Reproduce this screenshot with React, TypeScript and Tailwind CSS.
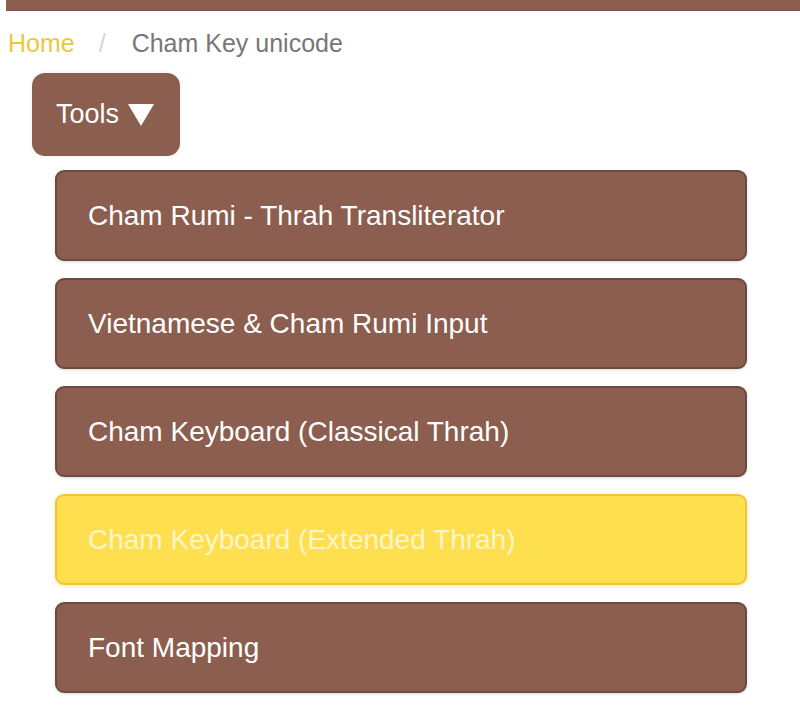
import React from "react";

const items = [
  { label: "Cham Rumi - Thrah Transliterator", active: false },
  { label: "Vietnamese & Cham Rumi Input", active: false },
  { label: "Cham Keyboard (Classical Thrah)", active: false },
  { label: "Cham Keyboard (Extended Thrah)", active: true },
  { label: "Font Mapping", active: false },
];

export default function App() {
  return (
    <div className="w-[800px] h-[720px] bg-white overflow-hidden font-['Liberation_Sans',Arial,sans-serif]">
      <div className="ml-[6px] h-[11px] bg-[#8b5e4f] border-b border-[#7a5142]" />
      <nav className="mt-[18px] pl-[8px] flex items-center h-[29px] text-[25px] leading-[29px]">
        <span className="text-[#e8c93e]">Home</span>
        <span className="ml-[24px] mr-[26px] text-[#d6d6d6]">/</span>
        <span className="text-[#777777]">Cham Key unicode</span>
      </nav>
      <div className="mt-[15px] ml-[32px]">
        <button className="flex items-center h-[83px] pl-[24px] pr-[26px] rounded-[13px] bg-[#8b5e4f] text-white text-[27px] shadow-[0_0_4px_rgba(0,0,0,0.08)]">
          <span>Tools</span>
          <svg className="ml-[9px]" width="26" height="22" viewBox="0 0 26 22">
            <polygon points="0,0 26,0 13,22" fill="#ffffff" />
          </svg>
        </button>
      </div>
      <div className="mt-[14px] ml-[55px] w-[692px] flex flex-col gap-[17px]">
        {items.map((it) => (
          <div
            key={it.label}
            className={
              it.active
                ? "h-[91px] flex items-center pl-[31px] rounded-[9px] border-2 border-[#f3c536] bg-[#fedf50] text-[#fff5c8] text-[28px] shadow-[0_1px_4px_rgba(250,200,40,0.35)]"
                : "h-[91px] flex items-center pl-[31px] rounded-[9px] border-2 border-[#6e4a3e] bg-[#8b5e4f] text-white text-[28px] shadow-[0_1px_3px_rgba(0,0,0,0.15)]"
            }
          >
            {it.label}
          </div>
        ))}
      </div>
    </div>
  );
}
